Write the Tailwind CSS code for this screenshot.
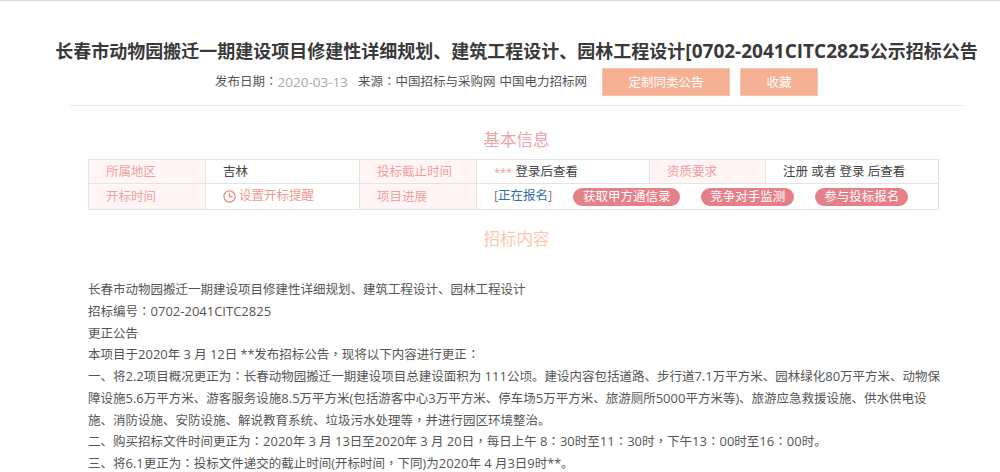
<!DOCTYPE html>
<html lang="zh-CN">
<head>
  <meta charset="UTF-8" />
  <title>招标公告</title>
  <script src="https://cdn.jsdelivr.net/npm/@tailwindcss/browser@4"></script>
</head>
<body class="bg-white overflow-hidden font-['Open_Sans','Noto_Sans_CJK_SC',sans-serif]">
<div class="h-[472px] w-[1000px] overflow-hidden border-t border-[#d9d9d9]">
  <div class="w-[1033px] flex flex-col items-center">
    <!-- title -->
    <h1 class="mt-[37px] h-[26px] leading-[26px] text-[18px] font-bold text-[#3a3a3a] whitespace-nowrap">长春市动物园搬迁一期建设项目修建性详细规划、建筑工程设计、园林工程设计<span class="text-[19px]">[0702-2041CITC2825</span>公示招标公告</h1>

    <!-- meta row -->
    <div class="mt-[4px] h-[28px] flex items-center text-[12.5px] text-[#555] whitespace-nowrap">
      <span>发布日期<span lang="zh-Hant" class="font-['Noto_Sans_CJK_TC']">：</span></span>
      <span class="text-[#aaa] text-[13.5px]">2020-03-13</span>
      <span class="ml-[10px]">来源<span lang="zh-Hant" class="font-['Noto_Sans_CJK_TC']">：</span>中国招标与采购网</span>
      <span class="ml-[4px]">中国电力招标网</span>
      <a class="ml-[15px] w-[128px] h-[28px] leading-[28px] text-center bg-[#f6b093] border border-[#f8c4ae] text-white">定制同类公告</a>
      <a class="ml-[10px] w-[78px] h-[28px] leading-[28px] text-center bg-[#f6b093] border border-[#f8c4ae] text-white">收藏</a>
    </div>

    <div class="w-[893px] mt-[9px] border-t border-[#e8e8e8]"></div>

    <h2 class="mt-[23px] h-[22px] leading-[22px] text-[16.5px] text-[#f0a3a6]">基本信息</h2>

    <!-- info table -->
    <div class="mt-[8px] self-start ml-[88px] w-[851px] grid grid-cols-[117px_154px_117px_173px_116px_1fr] grid-rows-[24px_25px] border border-[#e4e4e4] text-[12.5px] whitespace-nowrap">
      <div class="bg-[#fff5f5] text-[#f0a0a3] pl-[17px] leading-[24px] border-r border-b border-[#e4e4e4]">所属地区</div>
      <div class="text-[#444] pl-[17px] leading-[24px] border-r border-b border-[#e4e4e4]">吉林</div>
      <div class="bg-[#fff5f5] text-[#f0a0a3] pl-[17px] leading-[24px] border-r border-b border-[#e4e4e4]">投标截止时间</div>
      <div class="pl-[17px] leading-[24px] text-[#444] border-r border-b border-[#e4e4e4]"><span class="text-[#f0a0a3] text-[11px]">***</span> 登录后查看</div>
      <div class="bg-[#fff5f5] text-[#f0a0a3] pl-[17px] leading-[24px] border-r border-b border-[#e4e4e4]">资质要求</div>
      <div class="pl-[17px] leading-[24px] text-[#444] border-b border-[#e4e4e4]">注册 或者 登录 后查看</div>

      <div class="bg-[#fff5f5] text-[#f0a0a3] pl-[17px] leading-[25px] border-r border-[#e4e4e4]">开标时间</div>
      <div class="flex items-center gap-[3px] pl-[17px] text-[#ef9a90] border-r border-[#e4e4e4]">
        <svg class="w-[13px] h-[13px]" viewBox="0 0 13 13" fill="none" stroke="#ee8a78" stroke-width="1.3"><circle cx="6.5" cy="6.5" r="5.6"/><path d="M6.5 3v3.7h3.2"/></svg>
        <span>设置开标提醒</span>
      </div>
      <div class="bg-[#fff5f5] text-[#f0a0a3] pl-[17px] leading-[25px] border-r border-[#e4e4e4]">项目进展</div>
      <div class="col-span-3 flex items-center pl-[17px]">
        <span class="text-[#8a7a6a]">[<span class="text-[#2f6fa8]">正在报名</span>]</span>
        <a class="ml-[21px] w-[107px] h-[18px] leading-[18px] text-center rounded-full bg-[#e57f88] text-white">获取甲方通信录</a>
        <a class="ml-[21px] w-[93px] h-[18px] leading-[18px] text-center rounded-full bg-[#e57f88] text-white">竞争对手监测</a>
        <a class="ml-[21px] w-[93px] h-[18px] leading-[18px] text-center rounded-full bg-[#e57f88] text-white">参与投标报名</a>
      </div>
    </div>

    <h2 class="mt-[18px] h-[22px] leading-[22px] text-[16.5px] text-[#fbc8ae]">招标内容</h2>

    <!-- notice body -->
    <div class="mt-[29px] self-start ml-[88px] w-[853px] text-[12.5px] leading-[21.75px] text-[#555] [&_span]:leading-none">
      <p>长春市动物园搬迁一期建设项目修建性详细规划、建筑工程设计、园林工程设计</p>
      <p>招标编号<span lang="zh-Hant" class="font-['Noto_Sans_CJK_TC']">：</span><span class="text-[13px]">0702-2041CITC2825</span></p>
      <p>更正公告</p>
      <p>本项目于<span class="text-[13px]">2020</span>年 <span class="text-[13px]">3</span> 月 <span class="text-[13px]">12</span>日 **发布招标公告<span lang="zh-Hant" class="font-['Noto_Sans_CJK_TC']">，</span>现将以下内容进行更正<span lang="zh-Hant" class="font-['Noto_Sans_CJK_TC']">：</span></p>
      <p>一、将<span class="text-[13px]">2.2</span>项目概况更正为<span lang="zh-Hant" class="font-['Noto_Sans_CJK_TC']">：</span>长春动物园搬迁一期建设项目总建设面积为 <span class="text-[13px]">111</span>公顷。建设内容包括道路、步行道<span class="text-[13px]">7.1</span>万平方米、园林绿化<span class="text-[13px]">80</span>万平方米、动物保障设施<span class="text-[13px]">5.6</span>万平方米、游客服务设施<span class="text-[13px]">8.5</span>万平方米(包括游客中心<span class="text-[13px]">3</span>万平方米、停车场<span class="text-[13px]">5</span>万平方米、旅游厕所<span class="text-[13px]">5000</span>平方米等)、旅游应急救援设施、供水供电设施、消防设施、安防设施、解说教育系统、垃圾污水处理等<span lang="zh-Hant" class="font-['Noto_Sans_CJK_TC']">，</span>并进行园区环境整治。</p>
      <p>二、购买招标文件时间更正为<span lang="zh-Hant" class="font-['Noto_Sans_CJK_TC']">：</span><span class="text-[13px]">2020</span>年 <span class="text-[13px]">3</span> 月 <span class="text-[13px]">13</span>日至<span class="text-[13px]">2020</span>年 <span class="text-[13px]">3</span> 月 <span class="text-[13px]">20</span>日<span lang="zh-Hant" class="font-['Noto_Sans_CJK_TC']">，</span>每日上午 <span class="text-[13px]">8</span><span lang="zh-Hant" class="font-['Noto_Sans_CJK_TC']">：</span><span class="text-[13px]">30</span>时至<span class="text-[13px]">11</span><span lang="zh-Hant" class="font-['Noto_Sans_CJK_TC']">：</span><span class="text-[13px]">30</span>时<span lang="zh-Hant" class="font-['Noto_Sans_CJK_TC']">，</span>下午<span class="text-[13px]">13</span><span lang="zh-Hant" class="font-['Noto_Sans_CJK_TC']">：</span><span class="text-[13px]">00</span>时至<span class="text-[13px]">16</span><span lang="zh-Hant" class="font-['Noto_Sans_CJK_TC']">：</span><span class="text-[13px]">00</span>时。</p>
      <p>三、将<span class="text-[13px]">6.1</span>更正为<span lang="zh-Hant" class="font-['Noto_Sans_CJK_TC']">：</span>投标文件递交的截止时间(开标时间<span lang="zh-Hant" class="font-['Noto_Sans_CJK_TC']">，</span>下同)为<span class="text-[13px]">2020</span>年 <span class="text-[13px]">4</span> 月<span class="text-[13px]">3</span>日<span class="text-[13px]">9</span>时**。</p>
    </div>
  </div>
</div>
</body>
</html>
